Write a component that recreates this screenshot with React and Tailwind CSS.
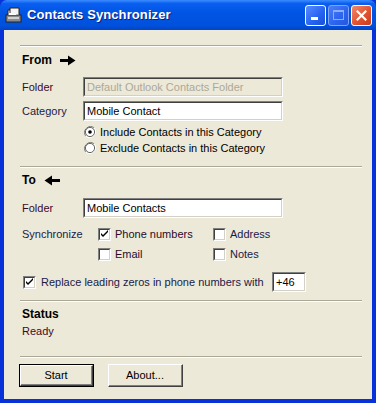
import React from "react";

const font = { fontFamily: '"Liberation Sans", Arial, sans-serif' };

function Sep() {
  return (
    <div className="h-[2px] flex flex-col">
      <div className="h-px bg-[#ACA899]" />
      <div className="h-px bg-white" />
    </div>
  );
}

function Sunken({ className = "", children, disabled }) {
  return (
    <div className={`border-t border-l border-[#808080] border-b-white border-r-white border-b border-r ${className}`}>
      <div className={`h-full border-t border-l border-[#404040] border-b border-r border-b-[#D4D0C8] border-r-[#D4D0C8] ${disabled ? "bg-[#ECE9D8]" : "bg-white"} flex items-center px-[2px]`}>
        {children}
      </div>
    </div>
  );
}

function Check({ checked }) {
  return (
    <div className="w-[13px] h-[13px] shrink-0 border-t border-l border-[#808080] border-b border-r border-b-white border-r-white">
      <div className="w-full h-full border-t border-l border-[#404040] border-b border-r border-b-[#D4D0C8] border-r-[#D4D0C8] bg-white">
        {checked && (
          <svg width="9" height="9" viewBox="0 0 9 9" className="block">
            <path d="M1 3 L1 5 L3 7 L8 2 L8 0 L3 5 Z" fill="#000" />
          </svg>
        )}
      </div>
    </div>
  );
}

function Radio({ checked }) {
  return (
    <svg width="12" height="12" viewBox="0 0 12 12" className="shrink-0">
      <path d="M10.2 1.8 A6 6 0 0 0 1.8 10.2" stroke="#808080" strokeWidth="1" fill="none" />
      <path d="M1.8 10.2 A6 6 0 0 0 10.2 1.8" stroke="#fff" strokeWidth="1" fill="none" />
      <circle cx="6" cy="6" r="4.6" fill="#fff" stroke="#404040" strokeWidth="0.8" />
      {checked && <circle cx="6" cy="6" r="1.8" fill="#000" />}
    </svg>
  );
}

function Arrow({ dir }) {
  return (
    <svg width="16" height="11" viewBox="0 0 16 11" className="ml-[8px]" style={{ transform: dir === "left" ? "scaleX(-1)" : undefined }}>
      <path d="M0 4 L8 4 L8 0.5 L15.5 5.5 L8 10.5 L8 7 L0 7 Z" fill="#000" />
    </svg>
  );
}

function Button({ children, def }) {
  return (
    <div className={`w-[75px] h-[23px] ${def ? "border border-black" : ""}`}>
      <div className="h-full border-t border-l border-white border-b border-r border-b-[#404040] border-r-[#404040]">
        <div className="h-full border-b border-r border-b-[#808080] border-r-[#808080] bg-[#ECE9D8] flex items-center justify-center text-[11px] text-black">
          {children}
        </div>
      </div>
    </div>
  );
}

export default function App() {
  return (
    <div className="w-[376px] h-[403px] flex flex-col bg-[#0831D9] text-[11px] text-black" style={font}>
      {/* Title bar */}
      <div className="h-[30px] shrink-0 flex items-center bg-[linear-gradient(180deg,#3C8CFF_0%,#0A5EF0_12%,#0054E3_45%,#0052DD_85%,#0343C6_100%)] rounded-t-[7px] px-[5px]">
        <svg width="17" height="16" viewBox="0 0 17 16" className="shrink-0">
          <rect x="1" y="8" width="15" height="7" fill="#8a8a8a" stroke="#222" strokeWidth="1" />
          <path d="M3 8 L3 3 L12 3 L12 8" fill="#fff" stroke="#222" />
          <path d="M5 6 L5 1 L14 1 L14 8" fill="#f4f4f4" stroke="#222" />
          <rect x="3" y="10" width="11" height="2" fill="#cfcfcf" />
        </svg>
        <div className="ml-[5px] text-white font-bold text-[13px] tracking-[0.1px]" style={{ textShadow: "1px 1px 0 #0A1F80" }}>
          Contacts Synchronizer
        </div>
        <div className="flex-1" />
        <div className="flex gap-[2px] mr-[-1px]">
          <div className="w-[21px] h-[21px] rounded-[3px] border border-white bg-[linear-gradient(135deg,#5A8CFF,#2462F0_60%,#1C4FD8)] flex items-end justify-start pl-[5px] pb-[5px]">
            <div className="w-[7px] h-[3px] bg-white" />
          </div>
          <div className="w-[21px] h-[21px] rounded-[3px] border border-[#7FA3F5] bg-[linear-gradient(135deg,#4C7EF5,#2A63EE_60%,#2457E0)] flex items-center justify-center">
            <div className="w-[11px] h-[10px] border border-[#8DAEF7] border-t-2" />
          </div>
          <div className="w-[21px] h-[21px] rounded-[3px] border border-white bg-[linear-gradient(135deg,#F08A6E,#E2522F_55%,#C73C1D)] flex items-center justify-center">
            <svg width="11" height="11" viewBox="0 0 11 11">
              <path d="M1.5 1.5 L9.5 9.5 M9.5 1.5 L1.5 9.5" stroke="#fff" strokeWidth="2.2" strokeLinecap="square" />
            </svg>
          </div>
        </div>
      </div>

      {/* Body */}
      <div className="flex-1 mx-[4px] mb-[4px] bg-[#ECE9D8] flex flex-col pl-[16px] pr-[10px]">
        <div className="mt-[15px]"><Sep /></div>

        <div className="mt-[3px] h-[20px] flex items-center pl-[2px] font-bold text-[12px]">
          From<Arrow />
        </div>

        <div className="mt-[7px] h-[20px] flex items-center">
          <div className="w-[63px] pl-[2px] text-[#3A0A2A]">Folder</div>
          <Sunken className="w-[200px] h-[20px]" disabled>
            <span className="text-[#ACA899] whitespace-nowrap overflow-hidden">Default Outlook Contacts Folder</span>
          </Sunken>
        </div>

        <div className="mt-[4px] h-[20px] flex items-center">
          <div className="w-[63px] pl-[2px] text-[#1A1A4A]">Category</div>
          <Sunken className="w-[200px] h-[20px]">
            <span>Mobile Contact</span>
          </Sunken>
        </div>

        <div className="mt-[3px] h-[16px] flex items-center pl-[64px]">
          <Radio checked />
          <span className="ml-[4px]">Include Contacts in this Category</span>
        </div>
        <div className="h-[16px] flex items-center pl-[64px]">
          <Radio />
          <span className="ml-[4px]">Exclude Contacts in this Category</span>
        </div>

        <div className="mt-[10px]"><Sep /></div>

        <div className="mt-[2px] h-[20px] flex items-center pl-[2px] font-bold text-[12px]">
          To<Arrow dir="left" />
        </div>

        <div className="mt-[8px] h-[20px] flex items-center">
          <div className="w-[63px] pl-[2px] text-[#3A0A2A]">Folder</div>
          <Sunken className="w-[200px] h-[20px]">
            <span>Mobile Contacts</span>
          </Sunken>
        </div>

        <div className="mt-[8px] h-[16px] flex items-center">
          <div className="w-[78px] pl-[2px] text-[#1A1A4A]">Synchronize</div>
          <div className="w-[115px] flex items-center">
            <Check checked />
            <span className="ml-[4px] text-[#2A0A2A]">Phone numbers</span>
          </div>
          <Check />
          <span className="ml-[4px] text-[#1A1A4A]">Address</span>
        </div>
        <div className="mt-[4px] h-[16px] flex items-center">
          <div className="w-[78px]" />
          <div className="w-[115px] flex items-center">
            <Check />
            <span className="ml-[4px] text-[#2A0A2A]">Email</span>
          </div>
          <Check />
          <span className="ml-[4px] text-[#1A1A4A]">Notes</span>
        </div>

        <div className="mt-[10px] h-[20px] flex items-center pl-[3px]">
          <Check checked />
          <span className="ml-[5px] text-[#1A1A4A] w-[231px] whitespace-nowrap">Replace leading zeros in phone numbers with</span>
          <Sunken className="w-[34px] h-[20px]">
            <span>+46</span>
          </Sunken>
        </div>

        <div className="mt-[8px]"><Sep /></div>

        <div className="mt-[4px] h-[16px] flex items-center pl-[2px] font-bold text-[12px]">Status</div>
        <div className="mt-[1px] h-[16px] flex items-center pl-[2px] text-[#3A0A2A]">Ready</div>

        <div className="mt-[17px]"><Sep /></div>

        <div className="mt-[6px] flex items-center gap-[14px] ml-[-1px]">
          <Button def>Start</Button>
          <Button>About...</Button>
        </div>
      </div>
    </div>
  );
}
